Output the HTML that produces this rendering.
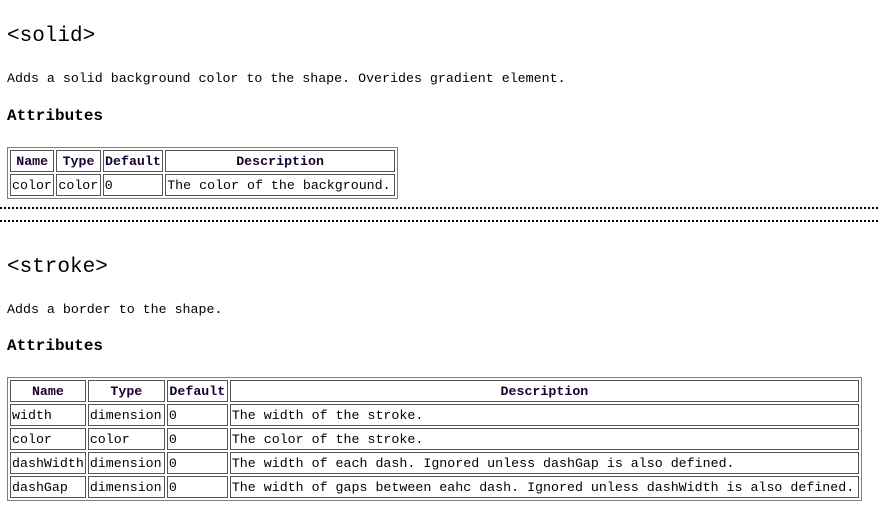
<!DOCTYPE html>
<html><head><meta charset="utf-8"><style>
body{margin:0;background:#fff;width:880px;height:508px;position:relative;overflow:hidden;font-family:"Liberation Mono","Noto Sans CJK SC",monospace;color:#000}
.a{position:absolute;left:7px;white-space:nowrap;line-height:1}
.h{font-size:21px}
.p{font-size:13.3px}
.t{font-size:16px;font-weight:bold}
.dot{position:absolute;left:0;width:880px;height:2px;background:repeating-linear-gradient(90deg,#000 0 2px,transparent 2px 4px)}
table{position:absolute;left:7px;border:1px solid #808080;border-collapse:separate;border-spacing:2px;font-size:13.3px;font-family:"Liberation Mono",monospace}
td,th{border:1px solid #555;padding:0 1px;height:20px;text-align:left;white-space:nowrap}
th{text-align:center;color:#1a0030;font-weight:bold}
</style></head><body>
<div class="a h" style="top:26px">&lt;solid&gt;</div>
<div class="a p" style="top:72px">Adds a solid background color to the shape. Overides gradient element.</div>
<div class="a t" style="top:108px">Attributes</div>
<table style="top:147px;width:391px">
<tr><th>Name</th><th>Type</th><th>Default</th><th>Description</th></tr>
<tr><td>color</td><td>color</td><td>0</td><td>The color of the background.</td></tr>
</table>
<div class="dot" style="top:207px"></div>
<div class="dot" style="top:220px"></div>
<div class="a h" style="top:257px">&lt;stroke&gt;</div>
<div class="a p" style="top:303px">Adds a border to the shape.</div>
<div class="a t" style="top:338px">Attributes</div>
<table style="top:377px;width:855px">
<tr><th style="width:71px">Name</th><th style="width:73px">Type</th><th style="width:57px">Default</th><th>Description</th></tr>
<tr><td>width</td><td>dimension</td><td>0</td><td>The width of the stroke.</td></tr>
<tr><td>color</td><td>color</td><td>0</td><td>The color of the stroke.</td></tr>
<tr><td>dashWidth</td><td>dimension</td><td>0</td><td>The width of each dash. Ignored unless dashGap is also defined.</td></tr>
<tr><td>dashGap</td><td>dimension</td><td>0</td><td>The width of gaps between eahc dash. Ignored unless dashWidth is also defined.</td></tr>
</table>
</body></html>
